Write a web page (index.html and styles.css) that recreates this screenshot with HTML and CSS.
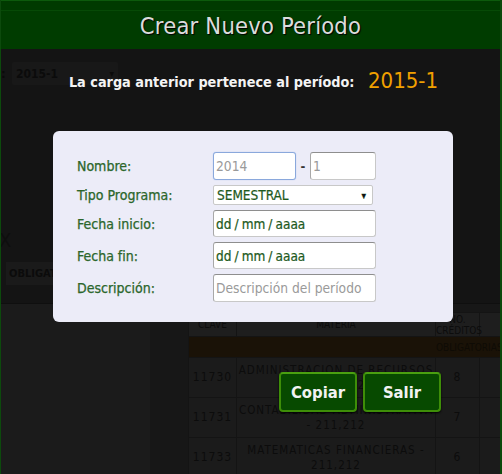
FILE: index.html
```html
<!DOCTYPE html>
<html lang="es">
<head>
<meta charset="utf-8">
<title>Crear Nuevo Período</title>
<link rel="stylesheet" href="styles.css">
</head>
<body>
<div class="page">
  <header class="topbar"><h1 class="title">Crear Nuevo Período</h1></header>
  <section class="tools">
    <div class="periodo-row"><span class="colon">:</span><div class="fake-select">2015-1<span class="caret">▾</span></div></div>
    <div class="close-x">X</div>
    <div class="tag">OBLIGATORIAS</div>
  </section>
  <section class="lower">
    <div class="side"></div>
    <div class="gutter"></div>
    <div class="tablewrap">
      <table class="grid">
        <thead>
          <tr><th class="c-clave">CLAVE</th><th class="c-mat">MATERIA</th><th class="c-cred">NO.<br>CRÉDITOS</th><th class="c-ht">HT</th></tr>
        </thead>
        <tbody>
          <tr class="group"><td colspan="4">OBLIGATORIAS</td></tr>
          <tr><td>11730</td><td class="mat">ADMINISTRACION DE RECURSOS<br>- 211,212</td><td>8</td><td>4</td></tr>
          <tr><td>11731</td><td class="mat">CONTABILIDAD ADMINISTRATIVA<br>- 211,212</td><td>7</td><td>2</td></tr>
          <tr><td>11733</td><td class="mat">MATEMATICAS FINANCIERAS -<br>211,212</td><td>6</td><td>2</td></tr>
        </tbody>
      </table>
    </div>
  </section>

  <p class="notice">La carga anterior pertenece al período: <span class="prev">2015-1</span></p>

  <form class="modal">
    <label class="lbl" for="anio">Nombre:</label>
    <div class="ctl name-ctl">
      <input class="inp inp-year focus" id="anio" placeholder="2014">
      <span class="dash">-</span>
      <input class="inp inp-num" placeholder="1">
    </div>
    <label class="lbl" for="tipo">Tipo Programa:</label>
    <div class="ctl"><div class="sel" id="tipo">SEMESTRAL<span class="sel-arrow">▾</span></div></div>
    <label class="lbl">Fecha inicio:</label>
    <div class="ctl"><div class="inp date">dd / mm / aaaa</div></div>
    <label class="lbl">Fecha fin:</label>
    <div class="ctl"><div class="inp date">dd / mm / aaaa</div></div>
    <label class="lbl" for="desc">Descripción:</label>
    <div class="ctl"><input class="inp" id="desc" placeholder="Descripción del período"></div>
  </form>

  <div class="actions">
    <button class="btn" type="button">Copiar</button>
    <button class="btn" type="button">Salir</button>
  </div>
</div>
</body>
</html>
```
FILE: styles.css
```css
* { box-sizing: border-box; }
html, body { margin: 0; padding: 0; }
body {
  background: #121212;
  font-family: "DejaVu Sans Condensed", "DejaVu Sans", sans-serif;
  width: 502px;
  height: 474px;
  overflow: hidden;
}
.page {
  position: relative;
  width: 502px;
  height: 474px;
  border-left: 1px solid #0c4a0c;
  border-right: 2px solid #0c4a0c;
  background: #131313;
  overflow: hidden;
}
.topbar {
  height: 49px;
  background: #003c00;
  border-top: 1px solid #0c5a0c;
  box-shadow: inset 0 9px 0 #003a00, inset 0 10px 0 #064a06;
  display: flex;
  align-items: center;
  justify-content: center;
}
.title {
  margin: 0;
  font-weight: normal;
  font-size: 23.5px;
  color: #dcdcdc;
  text-shadow: 1px 1px 1px #000;
  letter-spacing: 0.2px;
  padding-top: 2px;
}
.tools {
  height: 254px;
  background: #141414;
  position: relative;
  padding-top: 13px;
}
.periodo-row { display: flex; align-items: center; height: 23px; }
.colon { color: #0a0a0a; font-size: 13px; width: 11px; font-weight: bold; }
.fake-select {
  width: 106px; height: 23px;
  background: #181818;
  border-radius: 2px;
  color: #0b0b0b;
  font-size: 12px;
  font-weight: bold;
  display: flex; align-items: center;
  padding-left: 4px;
  position: relative;
}
.caret { position: absolute; right: 4px; font-size: 10px; }
.close-x {
  color: #0e0e0e;
  font-size: 20px;
  margin-top: 143px;
  margin-left: -2px;
  height: 26px;
}
.tag {
  margin-top: 8px;
  margin-left: 5px;
  width: 160px;
  height: 23px;
  background: #1a1a1a;
  color: #0b0b0b;
  font-size: 11px;
  font-weight: bold;
  display: flex; align-items: center;
  padding-left: 3px;
}
.lower {
  display: flex;
  height: 171px;
  border-top: 1px solid #0f0f0f;
}
.side { width: 149px; background: #1b1b1b; }
.gutter { width: 38px; background: #171717; }
.tablewrap { flex: 1; overflow: hidden; padding-top: 8px; background: #171717; }
.grid {
  border-collapse: collapse;
  table-layout: fixed;
  width: 360px;
  color: #0c0c0c;
  font-family: "DejaVu Sans Condensed", "DejaVu Sans", sans-serif;
  text-align: center;
}
.grid th {
  background: #1e1e1e;
  font-size: 10px;
  font-weight: normal;
  border: 1px solid #141414;
  height: 24px;
  line-height: 11px;
  padding: 0;
}
.c-clave { width: 48px; }
.c-mat { width: 199px; }
.c-cred { width: 44px; }
.c-ht { width: 69px; }
.grid td {
  background: #1b1b1b;
  border: 1px solid #141414;
  font-size: 12px;
  letter-spacing: 1px;
  height: 40px;
  padding: 0;
  line-height: 15px;
}
.grid td.mat {
  font-size: 11.5px;
  letter-spacing: 1px;
  padding: 0;
  white-space: nowrap;
}
.grid .group td {
  background: #1a1207;
  color: #0e0b05;
  height: 21px;
  font-size: 10px;
  letter-spacing: 0;
  text-align: left;
  padding-left: 247px;
}
.notice {
  position: absolute;
  top: 68px;
  left: 0;
  width: 100%;
  margin: 0;
  text-align: center;
  color: #f4f4f4;
  font-weight: bold;
  font-size: 14.3px;
  padding-left: 6px;
}
.prev {
  color: #f0a000;
  font-weight: normal;
  font-size: 22px;
  margin-left: 9px;
  vertical-align: -1px;
}
.modal {
  position: absolute;
  left: 52px;
  top: 131px;
  width: 400px;
  height: 191px;
  background: #ececf8;
  border-radius: 6px;
  padding: 21px 24px 0 24px;
  display: grid;
  grid-template-columns: 136px 166px;
  align-content: start;
  row-gap: 5px;
  align-items: center;
  margin: 0;
}
.lbl {
  color: #2b662b;
  font-size: 14px;
  -webkit-text-stroke: 0.25px #2b662b;
}
.ctl { display: flex; align-items: center; }
.inp {
  width: 163px;
  height: 28px;
  background: #fff;
  border: 1px solid #c8c8c8;
  border-top-color: #8e8e8e;
  border-left-color: #a8a8a8;
  border-radius: 3px;
  font-family: "DejaVu Sans Condensed", "DejaVu Sans", sans-serif;
  font-size: 13.7px;
  color: #1d5a1d;
  padding: 0 2px;
  margin: 0;
  outline: none;
}
.inp::placeholder { color: #9a9a9a; }
.inp-year { width: 83px; }
.inp-year.focus { border: 1px solid #8aa8dc; box-shadow: 0 0 1px #9ab8ec; }
.inp-num { width: 66px; }
.dash { color: #333; font-size: 13px; width: 14px; text-align: center; font-weight: bold; }
.date {
  display: flex; align-items: center;
  color: #1d5a1d; height: 27px;
  font-size: 13.5px;
  word-spacing: -0.8px;
  -webkit-text-stroke: 0.2px #1d5a1d;
}
.sel {
  width: 160px;
  height: 20px;
  background: #fff;
  border: 1px solid #c8c8c8;
  border-radius: 2px;
  color: #1d5a1d;
  font-size: 13.5px;
  -webkit-text-stroke: 0.2px #1d5a1d;
  display: flex; align-items: center;
  padding-left: 3px;
  position: relative;
}
.sel-arrow { position: absolute; right: 6px; color: #111; font-size: 10px; }
.name-ctl { height: 28px; }
.actions {
  position: absolute;
  left: 278px;
  top: 372px;
  display: flex;
  gap: 6px;
}
.btn {
  width: 78px;
  height: 40px;
  background: #074a00;
  border: 2px solid #3e8e08;
  border-top-color: #4aa010;
  border-radius: 4px;
  color: #f2f2f2;
  font-family: "DejaVu Sans Condensed", "DejaVu Sans", sans-serif;
  font-weight: bold;
  font-size: 16.5px;
  padding: 0;
  box-shadow: 0 1px 2px #000;
}
```
